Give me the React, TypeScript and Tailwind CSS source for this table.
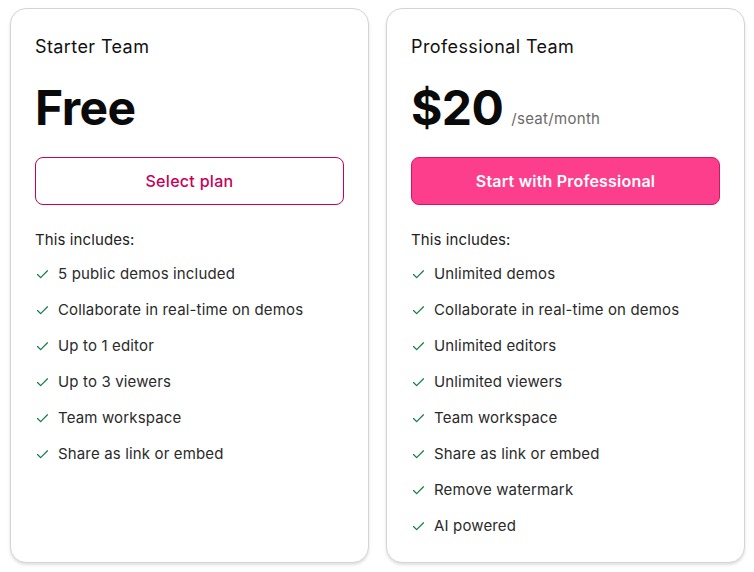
import React from 'react'
import { Check } from 'lucide-react'

type Plan = {
  name: string
  price: string
  unit?: string
  cta: string
  primary: boolean
  features: string[]
}

const plans: Plan[] = [
  {
    name: 'Starter Team',
    price: 'Free',
    cta: 'Select plan',
    primary: false,
    features: [
      '5 public demos included',
      'Collaborate in real-time on demos',
      'Up to 1 editor',
      'Up to 3 viewers',
      'Team workspace',
      'Share as link or embed',
    ],
  },
  {
    name: 'Professional Team',
    price: '$20',
    unit: '/seat/month',
    cta: 'Start with Professional',
    primary: true,
    features: [
      'Unlimited demos',
      'Collaborate in real-time on demos',
      'Unlimited editors',
      'Unlimited viewers',
      'Team workspace',
      'Share as link or embed',
      'Remove watermark',
      'AI powered',
    ],
  },
]

const PlanCard: React.FC<{ plan: Plan }> = ({ plan }) => {
  return (
    <div className="flex flex-col rounded-2xl border border-[#d4d4d4] bg-white px-6 pt-6 pb-[26px] shadow-[0_2px_3px_rgba(0,0,0,0.12)]">
      <div className="text-[18px] leading-7 tracking-[0.4px] text-[#111111]">{plan.name}</div>
      <div className="mt-[19px] flex items-end gap-[8px]">
        <span className="text-[48px] font-bold leading-[56px] tracking-[-0.6px] text-[#0a0a0a]">{plan.price}</span>
        {plan.unit && <span className="mb-[6px] text-[15px] tracking-[0.3px] text-[#6b6b6b]">{plan.unit}</span>}
      </div>
      {plan.primary ? (
        <button className="mt-[21px] h-[48px] w-full rounded-[8px] border border-[#d1166a] bg-[#fd3e8c] text-[16px] font-semibold tracking-[0.2px] text-white">
          {plan.cta}
        </button>
      ) : (
        <button className="mt-[21px] h-[48px] w-full rounded-[8px] border border-[#c8005a] bg-white text-[16px] font-medium tracking-[0.3px] text-[#c8005a]">
          {plan.cta}
        </button>
      )}
      <div className="mt-[25px] text-[15px] leading-5 tracking-[0.1px] text-[#222222]">This includes:</div>
      <ul className="mt-[14px] flex flex-col gap-4">
        {plan.features.map((f) => (
          <li key={f} className="flex items-center gap-[8px] text-[15px] leading-5 tracking-[0.15px] text-[#2a2a2a]">
            <Check size={15} strokeWidth={1.8} className="text-[#0b7a3e]" />
            <span>{f}</span>
          </li>
        ))}
      </ul>
    </div>
  )
}

export default function App() {
  return (
    <div className="min-h-screen bg-white pt-2 pl-[10px] pr-[9px] font-['Inter','Noto_Sans',sans-serif]">
      <div className="grid grid-cols-2 gap-[17px]">
        {plans.map((p) => (
          <PlanCard key={p.name} plan={p} />
        ))}
      </div>
    </div>
  )
}
